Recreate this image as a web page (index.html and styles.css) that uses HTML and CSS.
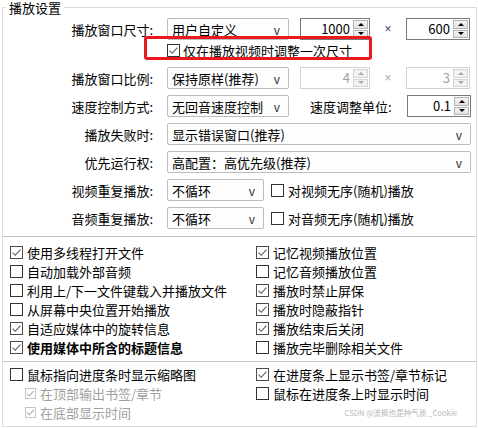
FILE: index.html
```html
<!DOCTYPE html>
<html lang="zh-CN">
<head>
<meta charset="utf-8">
<title>播放设置</title>
<link rel="stylesheet" href="styles.css">
</head>
<body>
<fieldset class="group">
  <legend>播放设置</legend>
  <div class="top">
    <div class="row">
      <span class="lbl">播放窗口尺寸:</span>
      <div class="combo w122"><span>用户自定义</span><span class="arr">v</span></div>
      <div class="spin s70"><span class="val">1000</span><span class="btns"><i class="up"></i><i class="dn"></i></span></div>
      <span class="times">×</span>
      <div class="spin s64"><span class="val">600</span><span class="btns"><i class="up"></i><i class="dn"></i></span></div>
    </div>
    <div class="row cbrow">
      <span class="ck"><svg class="box" viewBox="0 0 13 13"><rect x="0.5" y="0.5" width="12" height="12"/><path d="M2.6 6.6l2.6 2.7 5.2-5.6"/></svg>仅在播放视频时调整一次尺寸</span>
      <span class="mark"></span>
    </div>
    <div class="row">
      <span class="lbl">播放窗口比例:</span>
      <div class="combo w122"><span>保持原样(推荐)</span><span class="arr">v</span></div>
      <div class="spin s70 off"><span class="val">4</span><span class="btns"><i class="up"></i><i class="dn"></i></span></div>
      <span class="times off">×</span>
      <div class="spin s64 off"><span class="val">3</span><span class="btns"><i class="up"></i><i class="dn"></i></span></div>
    </div>
    <div class="row">
      <span class="lbl">速度控制方式:</span>
      <div class="combo w122"><span>无回音速度控制</span><span class="arr">v</span></div>
      <span class="lbl2">速度调整单位:</span>
      <div class="spin s64 push"><span class="val">0.1</span><span class="btns"><i class="up"></i><i class="dn"></i></span></div>
    </div>
    <div class="row">
      <span class="lbl">播放失败时:</span>
      <div class="combo grow"><span>显示错误窗口(推荐)</span><span class="arr">v</span></div>
    </div>
    <div class="row">
      <span class="lbl">优先运行权:</span>
      <div class="combo grow"><span>高配置：高优先级(推荐)</span><span class="arr">v</span></div>
    </div>
    <div class="row">
      <span class="lbl">视频重复播放:</span>
      <div class="combo w97"><span>不循环</span><span class="arr">v</span></div>
      <span class="ck side"><svg class="box" viewBox="0 0 13 13"><rect x="0.5" y="0.5" width="12" height="12"/></svg>对视频无序(随机)播放</span>
    </div>
    <div class="row">
      <span class="lbl">音频重复播放:</span>
      <div class="combo w97"><span>不循环</span><span class="arr">v</span></div>
      <span class="ck side"><svg class="box" viewBox="0 0 13 13"><rect x="0.5" y="0.5" width="12" height="12"/></svg>对音频无序(随机)播放</span>
    </div>
  </div>

  <div class="sep"></div>

  <div class="opts">
    <span class="ck"><svg class="box on" viewBox="0 0 13 13"><rect x="0.5" y="0.5" width="12" height="12"/><path d="M2.6 6.6l2.6 2.7 5.2-5.6"/></svg>使用多线程打开文件</span>
    <span class="ck"><svg class="box on" viewBox="0 0 13 13"><rect x="0.5" y="0.5" width="12" height="12"/><path d="M2.6 6.6l2.6 2.7 5.2-5.6"/></svg>记忆视频播放位置</span>
    <span class="ck"><svg class="box" viewBox="0 0 13 13"><rect x="0.5" y="0.5" width="12" height="12"/></svg>自动加载外部音频</span>
    <span class="ck"><svg class="box" viewBox="0 0 13 13"><rect x="0.5" y="0.5" width="12" height="12"/></svg>记忆音频播放位置</span>
    <span class="ck"><svg class="box" viewBox="0 0 13 13"><rect x="0.5" y="0.5" width="12" height="12"/></svg>利用上/下一文件键载入并播放文件</span>
    <span class="ck"><svg class="box on" viewBox="0 0 13 13"><rect x="0.5" y="0.5" width="12" height="12"/><path d="M2.6 6.6l2.6 2.7 5.2-5.6"/></svg>播放时禁止屏保</span>
    <span class="ck"><svg class="box" viewBox="0 0 13 13"><rect x="0.5" y="0.5" width="12" height="12"/></svg>从屏幕中央位置开始播放</span>
    <span class="ck"><svg class="box on" viewBox="0 0 13 13"><rect x="0.5" y="0.5" width="12" height="12"/><path d="M2.6 6.6l2.6 2.7 5.2-5.6"/></svg>播放时隐蔽指针</span>
    <span class="ck"><svg class="box on" viewBox="0 0 13 13"><rect x="0.5" y="0.5" width="12" height="12"/><path d="M2.6 6.6l2.6 2.7 5.2-5.6"/></svg>自适应媒体中的旋转信息</span>
    <span class="ck"><svg class="box on" viewBox="0 0 13 13"><rect x="0.5" y="0.5" width="12" height="12"/><path d="M2.6 6.6l2.6 2.7 5.2-5.6"/></svg>播放结束后关闭</span>
    <span class="ck bold"><svg class="box on" viewBox="0 0 13 13"><rect x="0.5" y="0.5" width="12" height="12"/><path d="M2.6 6.6l2.6 2.7 5.2-5.6"/></svg>使用媒体中所含的标题信息</span>
    <span class="ck"><svg class="box" viewBox="0 0 13 13"><rect x="0.5" y="0.5" width="12" height="12"/></svg>播放完毕删除相关文件</span>
  </div>

  <div class="sep sep2"></div>

  <div class="opts opts2">
    <span class="ck"><svg class="box" viewBox="0 0 13 13"><rect x="0.5" y="0.5" width="12" height="12"/></svg>鼠标指向进度条时显示缩略图</span>
    <span class="ck"><svg class="box on" viewBox="0 0 13 13"><rect x="0.5" y="0.5" width="12" height="12"/><path d="M2.6 6.6l2.6 2.7 5.2-5.6"/></svg>在进度条上显示书签/章节标记</span>
    <span class="ck sub"><svg class="box small" viewBox="0 0 11 11"><rect x="0.5" y="0.5" width="10" height="10"/><path d="M2 5.6l2.2 2.3 4.6-4.9"/></svg>在顶部输出书签/章节</span>
    <span class="ck"><svg class="box" viewBox="0 0 13 13"><rect x="0.5" y="0.5" width="12" height="12"/></svg>鼠标在进度条上时显示时间</span>
    <span class="ck sub"><svg class="box small" viewBox="0 0 11 11"><rect x="0.5" y="0.5" width="10" height="10"/><path d="M2 5.6l2.2 2.3 4.6-4.9"/></svg>在底部显示时间</span>
    <span class="wm">CSDN @流枫也是种气质 _Cookie</span>
  </div>
</fieldset>
</body>
</html>
```
FILE: styles.css
```css
html, body {
  margin: 0;
  padding: 0;
  background: #ffffff;
}
body {
  font-family: "Noto Sans CJK SC", "Noto Sans", sans-serif;
  font-size: 13px;
  line-height: 17px;
  color: #000000;
}
.group {
  margin: 0 0 0 2px;
  padding: 0 5px 4px 0;
  border: 1px solid #dcdcdc;
  width: 475px;
  box-sizing: border-box;
  min-width: 0;
}
.group legend {
  margin-left: 3px;
  padding: 0 3px;
  line-height: 15px;
  font-size: 13px;
}
.top {
  display: flex;
  flex-direction: column;
  gap: 6px;
  padding-top: 3px;
}
.row {
  display: flex;
  align-items: center;
  height: 22px;
}
.lbl {
  flex: none;
  width: 150px;
  margin-right: 14px;
  text-align: right;
  white-space: nowrap;
}
.lbl2 {
  margin-left: 21px;
  white-space: nowrap;
}
.combo {
  flex: none;
  display: flex;
  align-items: center;
  justify-content: space-between;
  height: 22px;
  box-sizing: border-box;
  border: 1px solid #bdbdbd;
  border-radius: 2px;
  background: #fdfdfd;
  padding: 0 8px 0 4px;
  white-space: nowrap;
}
.combo .arr {
  color: #333333;
  font-size: 12px;
}
.w122 { width: 122px; }
.w97 { width: 97px; }
.grow { flex: 1; }
.w122 + .spin { margin-left: 11px; }
.spin {
  flex: none;
  display: flex;
  height: 22px;
  box-sizing: border-box;
  border: 1px solid #7a7a7a;
  background: #ffffff;
  padding: 1px;
}
.s70 { width: 70px; }
.s64 { width: 64px; }
.push { margin-left: auto; }
.spin .val {
  flex: 1;
  text-align: right;
  padding-right: 3px;
  line-height: 18px;
}
.btns {
  flex: none;
  width: 15px;
  display: flex;
  flex-direction: column;
  gap: 1px;
}
.btns i {
  flex: 1;
  display: flex;
  align-items: center;
  justify-content: center;
  border: 1px solid #b4b4b4;
  background: linear-gradient(#f4f4f4, #e2e2e2);
}
.btns .up::after {
  content: "";
  border-left: 3px solid transparent;
  border-right: 3px solid transparent;
  border-bottom: 3px solid #000000;
}
.btns .dn::after {
  content: "";
  border-left: 3px solid transparent;
  border-right: 3px solid transparent;
  border-top: 3px solid #000000;
}
.spin.off {
  border-color: #d2d2d2;
}
.spin.off .val {
  color: #a2a2a2;
}
.spin.off .btns i {
  border-color: #d4d4d4;
  background: #f2f2f2;
}
.spin.off .up::after { border-bottom-color: #a8a8a8; }
.spin.off .dn::after { border-top-color: #a8a8a8; }
.times {
  flex: none;
  width: 36px;
  text-align: center;
  font-family: "Liberation Sans", sans-serif;
  font-size: 12px;
  color: #4a3878;
}
.times.off { color: #a8a8a8; }

.ck {
  display: flex;
  align-items: center;
  gap: 4px;
  white-space: nowrap;
}
.box {
  flex: none;
  width: 13px;
  height: 13px;
  fill: #ffffff;
  stroke: #333333;
  stroke-width: 1;
}
.box path {
  fill: none;
  stroke: #5a5a5a;
  stroke-width: 1.1;
}
.box.on rect { stroke: #4a4a4a; }
.box.small {
  width: 11px;
  height: 11px;
}
.box.small rect { stroke: #c4c4c4; }
.box.small path { stroke: #b4b4b4; }

.cbrow {
  position: relative;
  height: 15px;
  margin: -3px 0 3px;
  padding-left: 164px;
}
.cbrow .ck { gap: 3px; }
.mark {
  position: absolute;
  left: 141px;
  top: -7px;
  width: 228px;
  height: 24px;
  box-sizing: border-box;
  border: 3px solid #e9191f;
  border-radius: 3px;
}
.side { margin-left: 7px; }

.sep {
  height: 1px;
  background: #c4c4c4;
  margin: 7px -5px 0 0;
}
.sep2 { margin-top: 4px; }

.opts {
  display: grid;
  grid-template-columns: 246px 1fr;
  grid-auto-rows: 19px;
  padding: 6px 0 0 7px;
}
.opts2 { padding-top: 3px; }
.bold { font-weight: bold; }
.sub {
  padding-left: 15px;
  color: #a0a0a0;
}
.wm {
  align-self: center;
  text-align: right;
  padding-right: 14px;
  font-size: 7.6px;
  line-height: 10px;
  color: #b8b8b8;
}
```
